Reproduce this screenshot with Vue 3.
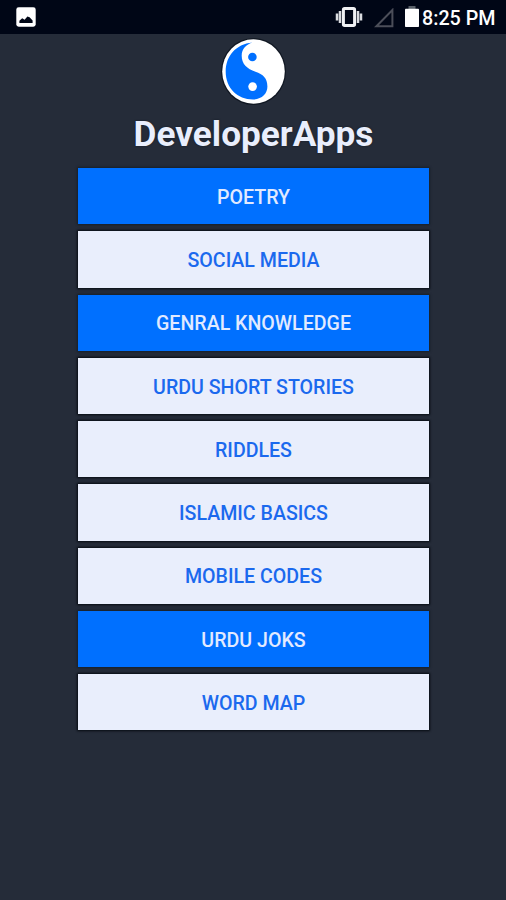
<script setup>
const items = [
  { label: "Poetry", primary: true },
  { label: "Social Media", primary: false },
  { label: "Genral Knowledge", primary: true },
  { label: "Urdu Short Stories", primary: false },
  { label: "Riddles", primary: false },
  { label: "Islamic Basics", primary: false },
  { label: "Mobile Codes", primary: false },
  { label: "Urdu Joks", primary: true },
  { label: "Word Map", primary: false }
];
</script>

<template>
  <div class="screen">
    <header class="status-bar">
      <svg class="picture" width="20" height="20" viewBox="0 0 20 20">
        <rect x="0.3" y="0.3" width="19.4" height="19.4" rx="2.4" fill="#fff" />
        <path d="M3.4 16v-2.2l2.8-2.6 2.4 1.6 2.8-3.4 2.2.8 3 3.4V16z" fill="#000616" />
      </svg>

      <div class="status-right">
        <svg class="vibrate" width="28" height="20" viewBox="0 0 28 20">
          <path d="M2 6.5v7M5 4v12M23 4v12M26 6.5v7" stroke="#d9dbdf" stroke-width="2.5" />
          <rect x="8.4" y="1.6" width="11.2" height="16.8" rx="1.2" fill="none" stroke="#f0f1f3" stroke-width="3" />
        </svg>
        <svg class="signal" width="20" height="20" viewBox="0 0 20 20">
          <path d="M2.4 18.2H18.4V2z" fill="none" stroke="#4b4e59" stroke-width="2" />
        </svg>
        <svg class="battery" width="14" height="21" viewBox="0 0 14 21">
          <rect x="3.5" y="0" width="7" height="3" fill="#596069" />
          <rect x="0" y="2.8" width="14" height="18.2" rx="0.8" fill="#fff" />
        </svg>
        <span class="time">8:25 PM</span>
      </div>
    </header>

    <main class="content">
      <svg class="logo" width="66" height="68" viewBox="0 0 66 68">
        <ellipse cx="32.5" cy="33.5" rx="32.5" ry="33.5" fill="#101722" />
        <ellipse cx="32.5" cy="33.5" rx="31.3" ry="32.2" fill="#fff" />
        <path
          d="M31.5 4.6C14.5 6.2 4.7 18.5 4.7 33.7C4.7 50 16.5 61.4 32 61.4C41 61.4 46.4 55.8 46.4 48.6C46.4 40 42 36.5 34.5 33.8C26 30.8 20.7 26 20.7 17.8C20.7 11.2 25.2 6.4 31.5 4.6Z"
          fill="#0070ff"
        />
        <circle cx="31.4" cy="19" r="4.3" fill="#0070ff" />
        <circle cx="31.6" cy="48.6" r="4.3" fill="#fff" />
      </svg>

      <h1>DeveloperApps</h1>

      <nav class="menu">
        <button
          v-for="item in items"
          :key="item.label"
          class="menu-btn"
          :class="{ primary: item.primary }"
        >
          {{ item.label }}
        </button>
      </nav>
    </main>
  </div>
</template>

<style>
body {
  margin: 0;
  background: #252c39;
}
</style>

<style scoped>
.screen {
  height: 900px;
  overflow: hidden;
  background: #252c39;
  font-family: Roboto, sans-serif;
}

.status-bar {
  display: flex;
  justify-content: space-between;
  align-items: flex-start;
  height: 34px;
  padding: 0 11px 0 16px;
  box-sizing: border-box;
  background: #000616;
}

svg {
  display: block;
}

.picture {
  margin-top: 7px;
}

.status-right {
  display: flex;
}

.vibrate {
  margin: 7px 11px 0 0;
}

.signal {
  margin: 8px 11px 0 0;
}

.battery {
  margin: 6px 3px 0 0;
}

.time {
  width: 73px;
  margin-top: 7px;
  color: #fff;
  font-size: 19.7px;
  font-weight: 500;
  line-height: 23px;
  white-space: nowrap;
}

.content {
  display: flex;
  flex-direction: column;
  align-items: center;
  padding-top: 4px;
}

.logo {
  margin-left: 2px;
}

h1 {
  margin: 4px 0 0 1px;
  color: #e9eefc;
  font-size: 35.2px;
  font-weight: 700;
  line-height: 48px;
  text-shadow: 0 0 2px #101722;
}

.menu {
  display: flex;
  flex-direction: column;
  gap: 7px;
  width: 351.5px;
  margin-top: 10px;
  margin-left: 1px;
}

.menu-btn {
  height: 56.25px;
  padding: 2.6px 0 0;
  border: none;
  background: #e9eefc;
  box-shadow: 0 0 2px 1px #070b12;
  color: #1b69ee;
  font-family: inherit;
  font-size: 19.6px;
  font-weight: 500;
  text-transform: uppercase;
}

.menu-btn.primary {
  background: #0070ff;
  box-shadow: 0 0 2px 1px #17202a;
  color: #e1eaff;
}
</style>
